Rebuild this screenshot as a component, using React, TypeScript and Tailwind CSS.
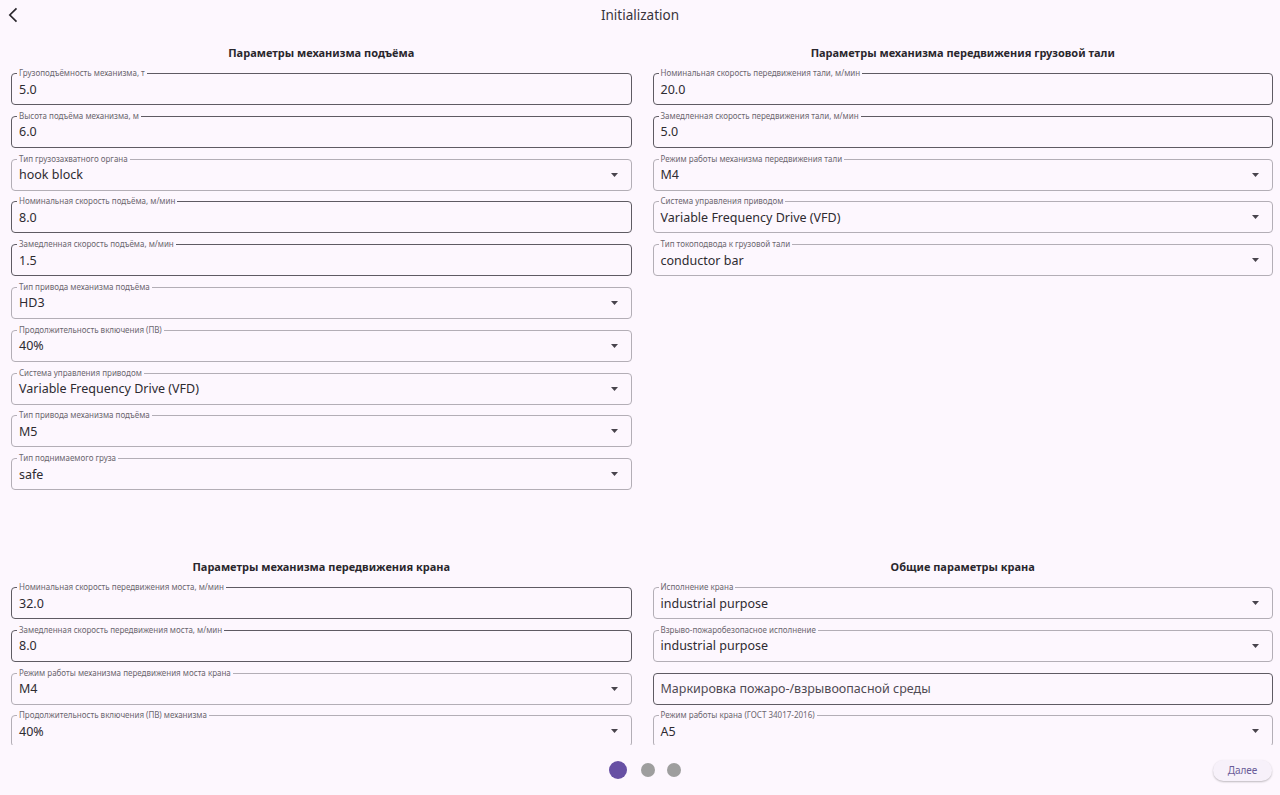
import React from "react";

type F = { label?: string; value: string; dd?: boolean; placeholder?: boolean };

const s1: F[] = [
  { label: "Грузоподъёмность механизма, т", value: "5.0" },
  { label: "Высота подъёма механизма, м", value: "6.0" },
  { label: "Тип грузозахватного органа", value: "hook block", dd: true },
  { label: "Номинальная скорость подъёма, м/мин", value: "8.0" },
  { label: "Замедленная скорость подъёма, м/мин", value: "1.5" },
  { label: "Тип привода механизма подъёма", value: "HD3", dd: true },
  { label: "Продолжительность включения (ПВ)", value: "40%", dd: true },
  { label: "Система управления приводом", value: "Variable Frequency Drive (VFD)", dd: true },
  { label: "Тип привода механизма подъёма", value: "M5", dd: true },
  { label: "Тип поднимаемого груза", value: "safe", dd: true },
];

const s2: F[] = [
  { label: "Номинальная скорость передвижения тали, м/мин", value: "20.0" },
  { label: "Замедленная скорость передвижения тали, м/мин", value: "5.0" },
  { label: "Режим работы механизма передвижения тали", value: "M4", dd: true },
  { label: "Система управления приводом", value: "Variable Frequency Drive (VFD)", dd: true },
  { label: "Тип токоподвода к грузовой тали", value: "conductor bar", dd: true },
];

const s3: F[] = [
  { label: "Номинальная скорость передвижения моста, м/мин", value: "32.0" },
  { label: "Замедленная скорость передвижения моста, м/мин", value: "8.0" },
  { label: "Режим работы механизма передвижения моста крана", value: "M4", dd: true },
  { label: "Продолжительность включения (ПВ) механизма", value: "40%", dd: true },
];

const s4: F[] = [
  { label: "Исполнение крана", value: "industrial purpose", dd: true },
  { label: "Взрыво-пожаробезопасное исполнение", value: "industrial purpose", dd: true },
  { value: "Маркировка пожаро-/взрывоопасной среды", placeholder: true },
  { label: "Режим работы крана (ГОСТ 34017-2016)", value: "A5", dd: true },
];

function Field({ f }: { f: F }) {
  const border = f.dd ? "border-[#b3aeb6]" : "border-[#5f5b63]";
  return (
    <div className={`relative h-[32px] shrink-0 rounded-[4px] border ${border} flex items-center pl-[7px] pr-[13px]`}>
      {f.label && (
        <span className="absolute left-[5px] top-[-6px] bg-[#fdf7fe] px-[2px] text-[8px] leading-[10px] text-[#6b666e]">
          {f.label}
        </span>
      )}
      <span
        className={`flex-1 pt-[1px] text-[12.5px] leading-[16px] ${
          f.placeholder ? "text-[#4f4a53]" : "text-[#2e2b31]"
        }`}
      >
        {f.value}
      </span>
      {f.dd && (
        <svg width="7" height="4" viewBox="0 0 7 4" className="shrink-0">
          <path d="M0 0 L7 0 L3.5 4 Z" fill="#48444c" />
        </svg>
      )}
    </div>
  );
}

function Section({ title, fields, cls }: { title: string; fields: F[]; cls?: string }) {
  return (
    <div className={`flex flex-col ${cls ?? ""}`}>
      <div className="h-[18px] text-center text-[11px] font-bold leading-[18px] text-[#2a272d]">{title}</div>
      <div className="mt-[11px] flex flex-col gap-[10.8px]">
        {fields.map((f, i) => (
          <Field key={i} f={f} />
        ))}
      </div>
    </div>
  );
}

export default function App() {
  return (
    <div
      className="flex h-[795px] w-[1280px] flex-col overflow-hidden bg-[#fdf7fe]"
      style={{ fontFamily: '"Noto Sans", "Open Sans", sans-serif' }}
    >
      <header className="relative flex h-[32px] shrink-0 items-center justify-center pb-[2px]">
        <svg
          width="20"
          height="20"
          viewBox="0 0 24 24"
          className="absolute left-[4px] top-[5px]"
          fill="none"
          stroke="#2a272d"
          strokeWidth="2"
        >
          <path d="M15 4 L7 12 L15 20" />
        </svg>
        <span className="text-[13.5px] leading-[20px] text-[#38343b]">Initialization</span>
      </header>
      <main className="min-h-0 flex-1 overflow-hidden pl-[11px] pr-[7px] pt-[12px]">
        <div className="grid grid-cols-2 gap-x-[21px]">
          <Section title="Параметры механизма подъёма" fields={s1} cls="h-[514px]" />
          <Section title="Параметры механизма передвижения грузовой тали" fields={s2} cls="h-[514px]" />
          <Section title="Параметры механизма передвижения крана" fields={s3} />
          <Section title="Общие параметры крана" fields={s4} />
        </div>
      </main>
      <footer className="grid h-[50px] shrink-0 grid-cols-[1fr_auto_1fr] items-center">
        <div />
        <div className="ml-[10px] flex items-center">
          <span className="h-[18px] w-[18px] rounded-full bg-[#6750a4]" />
          <span className="ml-[14px] h-[14px] w-[14px] rounded-full bg-[#9e9e9e]" />
          <span className="ml-[12px] h-[14px] w-[14px] rounded-full bg-[#9e9e9e]" />
        </div>
        <div className="flex justify-end pr-[8px]">
          <button className="h-[21px] w-[59px] rounded-full bg-[#f7f1fa] text-[10px] text-[#6a5c99] shadow-[0_1px_2px_rgba(0,0,0,0.25)]">
            Далее
          </button>
        </div>
      </footer>
    </div>
  );
}
